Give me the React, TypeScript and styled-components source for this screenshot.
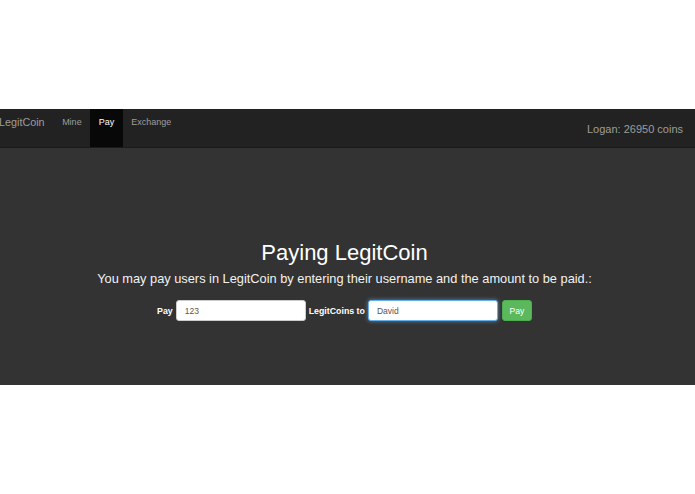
import React from "react";
import styled, { createGlobalStyle } from "styled-components";

const Global = createGlobalStyle`
  html, body { margin: 0; padding: 0; background: #fff; }
  body { font-family: "Liberation Sans", Arial, sans-serif; }
`;

const Page = styled.div`
  padding-top: 109px;
  width: 695px;
`;

const Navbar = styled.nav`
  height: 38px;
  background: #222;
  border-bottom: 1px solid #1a1a1a;
  display: flex;
  align-items: stretch;
  justify-content: space-between;
`;

const Left = styled.div`
  display: flex;
  align-items: stretch;
  margin-left: -1px;
`;

const Brand = styled.span`
  color: #9d9d9d;
  font-size: 10.8px;
  display: flex;
  align-items: center;
  margin-right: 9px;
  padding-bottom: 12px;
`;

const NavItem = styled.span<{ $active?: boolean }>`
  font-size: 9px;
  color: ${(p) => (p.$active ? "#fff" : "#9d9d9d")};
  background: ${(p) => (p.$active ? "#080808" : "transparent")};
  display: flex;
  align-items: center;
  padding: 0 8.5px 12px;
`;

const User = styled.span`
  color: #9d9d9d;
  font-size: 11px;
  display: flex;
  align-items: center;
  padding: 1px 12px 0 0;
`;

const Main = styled.main`
  background: #333;
  height: 237px;
  display: flex;
  flex-direction: column;
  align-items: center;
  padding: 92px 6px 0 0;
  box-sizing: border-box;
  color: #fff;
`;

const Title = styled.h1`
  margin: 0;
  font-weight: normal;
  font-size: 22px;
  line-height: 26px;
`;

const Lead = styled.p`
  margin: 5px 0 0;
  font-size: 12.8px;
  line-height: 16px;
  color: #f2f2f2;
`;

const Form = styled.div`
  margin-top: 13px;
  display: flex;
  align-items: center;
  gap: 3px;
`;

const Label = styled.span`
  font-size: 8.8px;
  font-weight: bold;
  color: #fff;
`;

const Input = styled.div<{ $focus?: boolean }>`
  width: 130px;
  height: 21px;
  box-sizing: border-box;
  background: #fff;
  border-radius: 3px;
  border: 1px solid ${(p) => (p.$focus ? "#66afe9" : "#ccc")};
  box-shadow: ${(p) => (p.$focus ? "0 0 4px rgba(102,175,233,0.7)" : "none")};
  font-size: 8.5px;
  color: #555;
  display: flex;
  align-items: center;
  padding-left: 8px;
`;

const Button = styled.button`
  width: 30px;
  height: 21px;
  border: 1px solid #4cae4c;
  background: #5cb85c;
  color: #fff;
  border-radius: 3px;
  font-family: inherit;
  font-size: 8.5px;
  padding: 0;
  margin-left: 1px;
`;

export default function App() {
  return (
    <Page>
      <Global />
      <Navbar>
        <Left>
          <Brand>LegitCoin</Brand>
          <NavItem>Mine</NavItem>
          <NavItem $active>Pay</NavItem>
          <NavItem>Exchange</NavItem>
        </Left>
        <User>Logan: 26950 coins</User>
      </Navbar>
      <Main>
        <Title>Paying LegitCoin</Title>
        <Lead>You may pay users in LegitCoin by entering their username and the amount to be paid.:</Lead>
        <Form>
          <Label>Pay</Label>
          <Input>123</Input>
          <Label>LegitCoins to</Label>
          <Input $focus>David</Input>
          <Button>Pay</Button>
        </Form>
      </Main>
    </Page>
  );
}
